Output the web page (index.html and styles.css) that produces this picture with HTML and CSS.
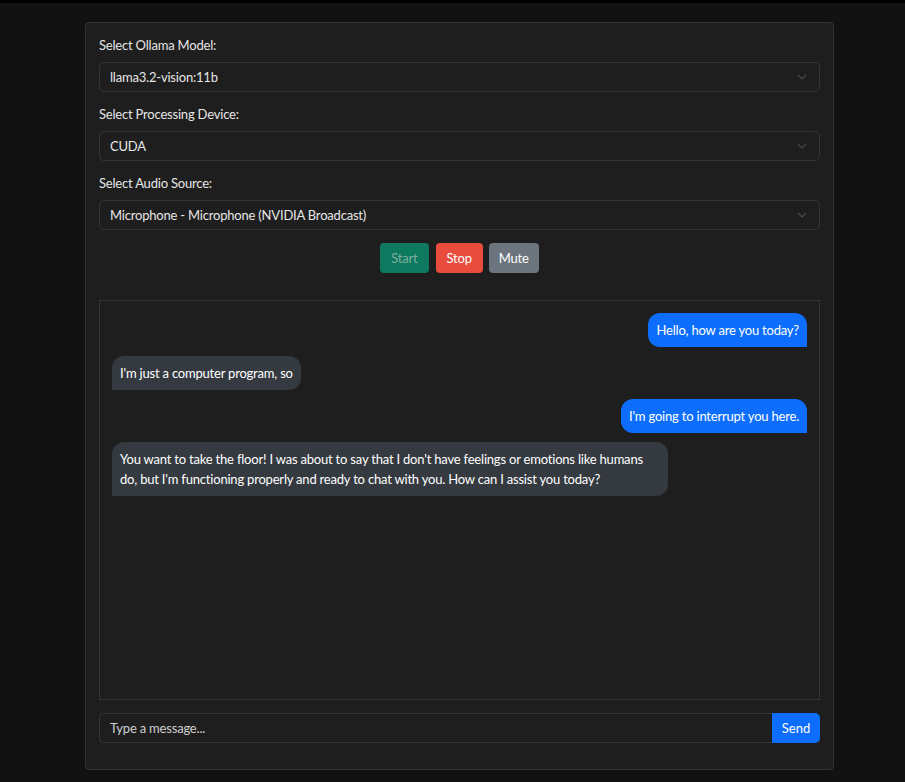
FILE: index.html
```html
<!DOCTYPE html>
<html>
<head>
<meta charset="utf-8">
<link rel="stylesheet" href="styles.css">
</head>
<body>
<div class="topbar"></div>
<div class="app">
  <div class="field">
    <label class="label">Select Ollama Model:</label>
    <div class="select"><span>llama3.2-vision:11b</span><svg class="chev" width="10" height="6" viewBox="0 0 10 6"><path d="M1 1l4 4 4-4" fill="none" stroke="#4a4a4a" stroke-width="1.2"/></svg></div>
  </div>
  <div class="field">
    <label class="label">Select Processing Device:</label>
    <div class="select"><span>CUDA</span><svg class="chev" width="10" height="6" viewBox="0 0 10 6"><path d="M1 1l4 4 4-4" fill="none" stroke="#4a4a4a" stroke-width="1.2"/></svg></div>
  </div>
  <div class="field">
    <label class="label">Select Audio Source:</label>
    <div class="select"><span>Microphone - Microphone (NVIDIA Broadcast)</span><svg class="chev" width="10" height="6" viewBox="0 0 10 6"><path d="M1 1l4 4 4-4" fill="none" stroke="#4a4a4a" stroke-width="1.2"/></svg></div>
  </div>
  <div class="controls">
    <button class="btn start">Start</button>
    <button class="btn stop">Stop</button>
    <button class="btn mute">Mute</button>
  </div>
  <div class="chat">
    <div class="msg user">Hello, how are you today?</div>
    <div class="msg bot">I'm just a computer program, so</div>
    <div class="msg user">I'm going to interrupt you here.</div>
    <div class="msg bot">You want to take the floor! I was about to say that I don't have feelings or emotions like humans do, but I'm functioning properly and ready to chat with you. How can I assist you today?</div>
  </div>
  <div class="inputrow">
    <div class="input">Type a message...</div>
    <button class="send">Send</button>
  </div>
</div>
</body>
</html>
```
FILE: styles.css
```css
html, body {
  margin: 0;
  padding: 0;
  background: #121212;
  font-family: Lato, "Open Sans", sans-serif;
  font-size: 13px;
  letter-spacing: -0.2px;
  color: #e6e6e6;
}
.topbar {
  height: 3px;
  background: #000;
}
.app {
  width: 721px;
  margin: 19px 0 0 85px;
  background: #1e1e1e;
  border: 1px solid #333;
  border-radius: 4px;
  padding: 12px 13px 26px 13px;
  box-sizing: content-box;
}
.field {
  display: flex;
  flex-direction: column;
}
.label {
  height: 20px;
  line-height: 20px;
  margin-bottom: 7px;
}
.field + .field .label {
  margin-top: 12px;
}
.select {
  height: 28px;
  border: 1px solid #343434;
  border-radius: 5px;
  background: #1e1e1e;
  display: flex;
  align-items: center;
  justify-content: space-between;
  padding: 0 12px 0 10px;
}
.controls {
  display: flex;
  justify-content: center;
  gap: 6px;
  margin-top: 13px;
}
.btn {
  height: 30px;
  border: none;
  border-radius: 4px;
  font-family: inherit;
  font-size: 13px;
  letter-spacing: -0.2px;
  padding: 0 11px;
  color: #fff;
}
.start { background: #0d7a5f; color: #7fae9f; margin-right: 1px; }
.stop { background: #e74c3c; }
.mute { background: #6c757d; padding: 0 10px; }
.chat {
  margin-top: 27px;
  height: 374px;
  border: 1px solid #353535;
  padding: 12px;
  display: flex;
  flex-direction: column;
  gap: 9px;
}
.msg {
  box-sizing: border-box;
  max-width: 80%;
  padding: 7px 8px;
  line-height: 20px;
  color: #fff;
  border-radius: 12px;
}
.user {
  align-self: flex-end;
  background: #0d6efd;
  border-bottom-right-radius: 0;
}
.bot {
  align-self: flex-start;
  background: #343a40;
  border-bottom-left-radius: 0;
}
.inputrow {
  display: flex;
  margin-top: 13px;
  height: 30px;
}
.input {
  flex: 1;
  border: 1px solid #353535;
  border-right: none;
  border-radius: 5px 0 0 5px;
  padding: 0 10px;
  display: flex;
  align-items: center;
  color: #cfcfcf;
}
.send {
  width: 48px;
  border: none;
  background: #0d6efd;
  color: #fff;
  font-family: inherit;
  font-size: 13px;
  border-radius: 0 5px 5px 0;
  padding: 0;
}
```
